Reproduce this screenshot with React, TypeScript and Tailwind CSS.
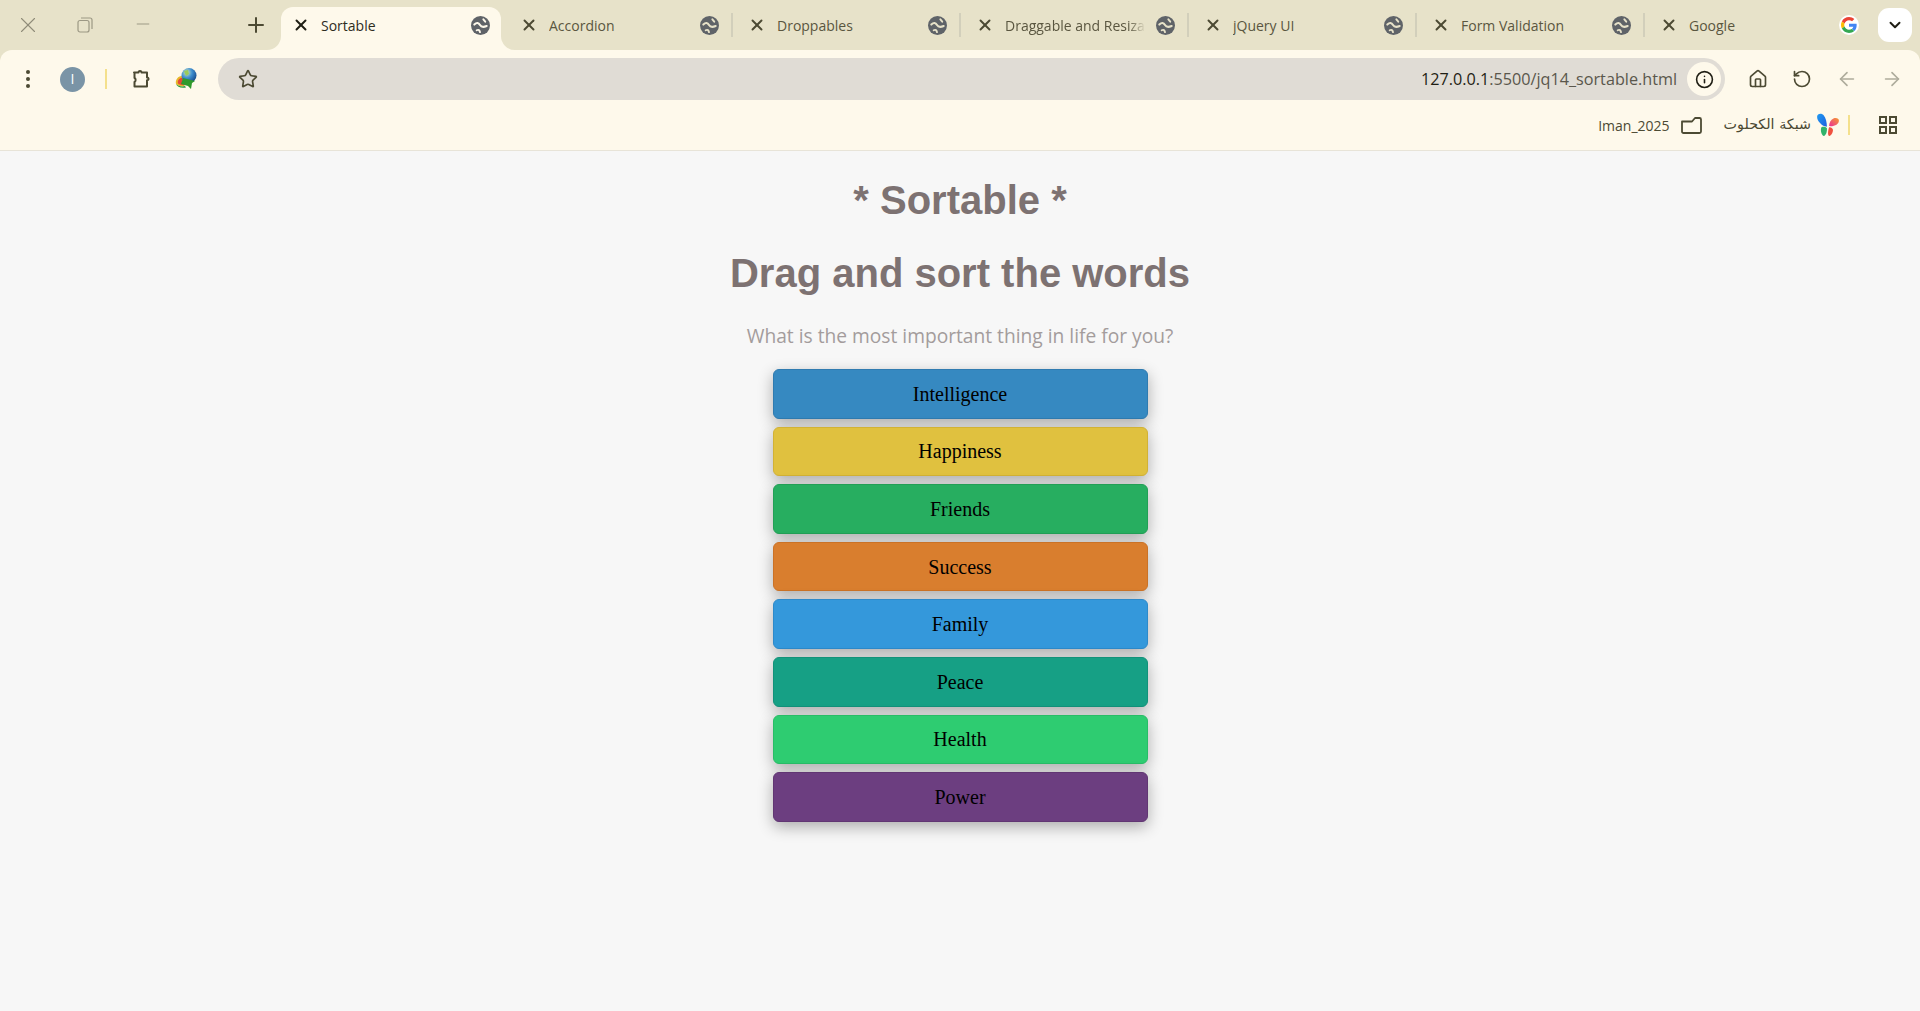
import { ArrowLeft, ArrowRight, ChevronDown, House, Info, Minus, Plus, RotateCcw, Star, X } from 'lucide-react';

const TABS = ['Accordion', 'Droppables', 'Draggable and Resizable', 'jQuery UI', 'Form Validation', 'Google'];

const ITEMS = [
  { label: 'Intelligence', color: 'bg-[#3689c1] border-[#2f7bb0]' },
  { label: 'Happiness', color: 'bg-[#e0c13f] border-[#d2b235]' },
  { label: 'Friends', color: 'bg-[#27ae60] border-[#22a056]' },
  { label: 'Success', color: 'bg-[#d97e2e] border-[#cb7226]' },
  { label: 'Family', color: 'bg-[#3498db] border-[#2d8aca]' },
  { label: 'Peace', color: 'bg-[#16a085] border-[#12927a]' },
  { label: 'Health', color: 'bg-[#2ecc71] border-[#28bd67]' },
  { label: 'Power', color: 'bg-[#6c3e80] border-[#613673]' },
];

function GlobeIcon({ bg }: { bg: string }) {
  return (
    <svg className="shrink-0" width="19" height="19" viewBox="0 0 20 20">
      <circle cx="10" cy="10" r="10" fill="#5f6368" />
      <path d="M3.500 9C6 6.500 8 7 9.500 9.500 11 12 13 12 16.500 10.500" fill="none" stroke={bg} strokeWidth="2.200" strokeLinecap="round" />
      <path d="M13 3.500L15 6M6 15C8 14 9 15 9.500 17" fill="none" stroke={bg} strokeWidth="2" strokeLinecap="round" />
    </svg>
  );
}

function GoogleLogo() {
  return (
    <span className="flex h-[20px] w-[20px] items-center justify-center rounded-full bg-white">
      <svg width="16" height="16" viewBox="0 0 48 48">
        <path fill="#EA4335" d="M24 9.500c3.500 0 6.700 1.200 9.200 3.600l6.900-6.900C35.900 2.400 30.500 0 24 0 14.600 0 6.500 5.400 2.600 13.200l8 6.200C12.500 13.700 17.800 9.500 24 9.500z" />
        <path fill="#4285F4" d="M47 24.500c0-1.600-.1-3.100-.4-4.500H24v9h13c-.6 3-2.200 5.500-4.800 7.200l7.700 6c4.500-4.200 7.100-10.300 7.100-17.700z" />
        <path fill="#FBBC05" d="M10.600 28.600c-.5-1.400-.8-3-.8-4.600s.3-3.200.8-4.600l-8-6.200C.9 16.500 0 20.100 0 24s.9 7.500 2.600 10.800l8-6.200z" />
        <path fill="#34A853" d="M24 48c6.500 0 11.900-2.100 15.900-5.800l-7.700-6c-2.100 1.400-4.900 2.300-8.200 2.300-6.200 0-11.500-4.200-13.400-9.900l-8 6.200C6.500 42.600 14.600 48 24 48z" />
      </svg>
    </span>
  );
}

function PuzzleIcon() {
  return (
    <svg width="20" height="20" viewBox="0 0 20 20" fill="none" stroke="#4c4a33" strokeWidth="2" strokeLinejoin="round">
      <path d="M3 3.500h4.500c0-2 3-2 3 0h5.500v5c2-.2 2 3 0 2.800v6.200H3.500v-4.500c1.500-.6 1.500-3.400 0-4V3.500z" />
    </svg>
  );
}

function IdmLogo() {
  return (
    <svg width="24" height="24" viewBox="0 0 24 24">
      <defs>
        <radialGradient id="idm-globe" cx="0.35" cy="0.3" r="0.8">
          <stop offset="0" stopColor="#cfe8c0" />
          <stop offset="0.45" stopColor="#3f8fd0" />
          <stop offset="1" stopColor="#12407f" />
        </radialGradient>
      </defs>
      <path d="M10 9 C3 8 0 13 1 17 C3 19 7 20 10 19 C6 17 6 12 10 11z" fill="#e8b82a" />
      <path d="M9 10.500 C4 10.500 2 14 3 16.500 C5 18 8 18.500 10 18 C7 16 7 13 9 12z" fill="#e2483a" />
      <path d="M1 17 C3 19 7 20 10 19 L11 20.500 C6 21.500 2 20 1 17z" fill="#2a9c3e" />
      <circle cx="14" cy="8.500" r="7.500" fill="url(#idm-globe)" />
      <path d="M8 11 L20 14 L17 16 L16 22 L13 19 L6 17z" fill="#2f9a2c" />
      <path d="M9 4 L13 3 L14 7 L11 9z" fill="#9ccb5a" />
    </svg>
  );
}

function ButterflyLogo() {
  return (
    <svg width="24" height="24" viewBox="0 0 22 22">
      <defs>
        <linearGradient id="bf-left" x1="0" y1="0" x2="1" y2="1">
          <stop offset="0" stopColor="#1f9bf0" />
          <stop offset="1" stopColor="#1d5fe0" />
        </linearGradient>
        <linearGradient id="bf-right" x1="1" y1="0" x2="0" y2="1">
          <stop offset="0" stopColor="#f59a2c" />
          <stop offset="1" stopColor="#ec2f9c" />
        </linearGradient>
      </defs>
      <path d="M1 3.500C1 .5 5-.5 7 2c2 2.500 3 6.500 3 10.500-2.500 0-4.500-1-6.500-3.500C2 7.500 1 5.500 1 3.500z" fill="url(#bf-left)" />
      <path d="M5 13c2-.8 4.500-.3 5 1 .2 2.500-.5 6-2.500 7C5.500 21.500 3.500 16 5 13z" fill="#31b36b" />
      <path d="M12 12c0-3 1.500-6 4-7 3-1 5 .5 5 2 0 3-4 5.500-9 5z" fill="url(#bf-right)" />
      <path d="M12 13c2 0 4 1 3.500 3.500-.5 3-2.500 5-3.500 4.500-1.500-.5-1-5 0-8z" fill="#f0513f" />
    </svg>
  );
}

function BrowserTab({ title, last, fade }: { title: string; last: boolean; fade: boolean }) {
  return (
    <div className="flex h-[36px] w-[228px] shrink-0 items-center">
      <X size={18} strokeWidth={2.6} className="ml-[15px] shrink-0 text-[#4c4a33]" />
      <span
        className={`ml-[11px] w-[150px] overflow-hidden text-[14px] whitespace-nowrap text-[#5a5640] ${
          fade ? '[mask-image:linear-gradient(to_right,black_82%,transparent_94%)]' : ''
        }`}
      >
        {title}
      </span>
      <span className="flex w-[20px] shrink-0 justify-center">
        {last ? <GoogleLogo /> : <GlobeIcon bg="#e7e2c9" />}
      </span>
      {!last && <span className="ml-[12px] h-[24px] w-[2px] shrink-0 bg-[#d2cfbb]" />}
    </div>
  );
}

export default function App() {
  return (
    <div className="h-[1011px] overflow-hidden bg-[#f7f7f7] font-['Open_Sans',sans-serif]">
      {/* tab strip */}
      <div className="flex h-[50px] items-center bg-[#e7e2c9]">
        <div className="flex w-[281px] shrink-0 items-center">
          <span className="flex w-[56px] justify-center">
            <X size={26} strokeWidth={1} className="text-[#8f8c78]" />
          </span>
          <span className="flex w-[58px] justify-center">
            <svg width="16" height="16" viewBox="0 0 16 16" fill="none" stroke="#9c9884" strokeWidth="1.200">
              <rect x="1" y="3.500" width="11" height="11.500" rx="2" />
              <path d="M4 1h9a2 2 0 0 1 2 2v9" />
            </svg>
          </span>
          <span className="flex w-[58px] justify-center">
            <Minus size={20} strokeWidth={1} className="mb-[3px] text-[#8f8c78]" />
          </span>
          <span className="flex flex-1 justify-end pr-[13px]">
            <Plus size={24} strokeWidth={2} className="text-[#4c4a33]" />
          </span>
        </div>
        {/* active tab */}
        <div className="relative mr-[4px] flex h-[43px] w-[220px] shrink-0 items-center self-end rounded-t-[12px] bg-[#fef9eb] pb-[7px]">
          <span className="absolute bottom-0 left-[-14px] h-[14px] w-[14px] bg-[#fef9eb]">
            <span className="block h-full w-full rounded-br-[14px] bg-[#e7e2c9]" />
          </span>
          <span className="absolute right-[-14px] bottom-0 h-[14px] w-[14px] bg-[#fef9eb]">
            <span className="block h-full w-full rounded-bl-[14px] bg-[#e7e2c9]" />
          </span>
          <X size={18} strokeWidth={2.6} className="ml-[11px] shrink-0 text-[#1f1e14]" />
          <span className="ml-[11px] w-[150px] text-[14px] text-[#2e2c1e]">Sortable</span>
          <GlobeIcon bg="#fef9eb" />
        </div>
        {TABS.map((title, i) => (
          <BrowserTab key={title} title={title} last={i === TABS.length - 1} fade={title.length > 20} />
        ))}
        <button className="ml-[5px] flex h-[34px] w-[34px] items-center justify-center rounded-[11px] bg-white">
          <ChevronDown size={18} strokeWidth={2.6} className="text-[#1f1e14]" />
        </button>
      </div>

      {/* toolbar */}
      <div className="bg-[#e7e2c9]">
        <div className="flex h-[58px] items-center rounded-t-[12px] bg-[#fef9eb] pl-[5px]">
          <span className="flex w-[45px] flex-col items-center gap-[3px]">
            <i className="h-[4px] w-[4px] rounded-full bg-[#4c4a33]" />
            <i className="h-[4px] w-[4px] rounded-full bg-[#4c4a33]" />
            <i className="h-[4px] w-[4px] rounded-full bg-[#4c4a33]" />
          </span>
          <span className="flex w-[45px] justify-center">
            <span className="flex h-[25px] w-[25px] items-center justify-center rounded-full bg-[#7a94a6] text-[14px] leading-none text-white">
              I
            </span>
          </span>
          <span className="flex w-[22px] justify-center">
            <i className="h-[20px] w-[2px] bg-[#f4e08c]" />
          </span>
          <span className="flex w-[47px] justify-center">
            <PuzzleIcon />
          </span>
          <span className="flex w-[45px] justify-center">
            <IdmLogo />
          </span>
          <div className="ml-[9px] flex h-[42px] w-[1507px] items-center rounded-full bg-[#e0dcd5] pr-[4px] pl-[20px]">
            <Star size={20} strokeWidth={2} className="text-[#4c4a33]" />
            <span className="mr-[10px] ml-auto text-[16.200px] text-[#5a574c]">
              <span className="text-[#1f1e14]">127.0.0.1</span>:5500/jq14_sortable.html
            </span>
            <span className="flex h-[34px] w-[34px] items-center justify-center rounded-full bg-[#fef9eb]">
              <Info size={19} strokeWidth={2} className="text-[#1f1e14]" />
            </span>
          </div>
          <span className="ml-[11px] flex w-[44px] justify-center">
            <House size={20} strokeWidth={2} className="text-[#4c4a33]" />
          </span>
          <span className="flex w-[44px] justify-center">
            <RotateCcw size={20} strokeWidth={2} className="text-[#4c4a33]" />
          </span>
          <span className="flex w-[45px] justify-center">
            <ArrowLeft size={22} strokeWidth={1.800} className="text-[#aeac9c]" />
          </span>
          <span className="flex w-[45px] justify-center">
            <ArrowRight size={22} strokeWidth={1.800} className="text-[#aeac9c]" />
          </span>
        </div>
      </div>

      {/* bookmarks bar */}
      <div className="flex h-[43px] items-center justify-end border-b border-[#e8e4d8] bg-[#fef9eb] pr-[23px] pb-[8px]">
        <span className="text-[14px] text-[#4c4a33]">Iman_2025</span>
        <svg className="ml-[11px]" width="21" height="17" viewBox="0 0 21 17" fill="none" stroke="#4c4a33" strokeWidth="1.800" strokeLinejoin="round">
          <path d="M1 4.500h10l3-3.500h4.500a1.500 1.500 0 0 1 1.500 1.500v12a1.500 1.500 0 0 1-1.500 1.500h-16A1.500 1.500 0 0 1 1 14.500z" />
        </svg>
        <span className="ml-[22px] font-['DejaVu_Sans',sans-serif] text-[14.300px] text-[#4c4a33]">شبكة الكحلوت</span>
        <span className="ml-[5px] flex">
          <ButterflyLogo />
        </span>
        <i className="ml-[8px] h-[20px] w-[2px] bg-[#f4e08c]" />
        <svg className="ml-[29px]" width="18" height="18" viewBox="0 0 18 18" fill="none" stroke="#4c4a33" strokeWidth="2">
          <rect x="1" y="1" width="6" height="6" />
          <rect x="11" y="1" width="6" height="6" />
          <rect x="1" y="11" width="6" height="6" />
          <rect x="11" y="11" width="6" height="6" />
        </svg>
      </div>

      {/* page */}
      <main className="flex flex-col items-center">
        <h1 className="mt-[26px] font-['Liberation_Sans',sans-serif] text-[40px] leading-[46px] font-bold text-[#7d7272]">* Sortable *</h1>
        <h2 className="mt-[27px] font-['Liberation_Sans',sans-serif] text-[40px] leading-[46px] font-bold text-[#7d7272]">Drag and sort the words</h2>
        <p className="mt-[26px] text-[19.200px] leading-[28px] text-[#a39c9c]">What is the most important thing in life for you?</p>
        <ul className="mt-[19px] w-[375px]">
          {ITEMS.map((item) => (
            <li
              key={item.label}
              className={`mb-[8px] flex h-[49.6px] items-center justify-center rounded-[6px] border font-['Liberation_Serif',serif] text-[20px] text-black shadow-[0_5px_15px_rgba(0,0,0,0.3)] ${item.color}`}
            >
              {item.label}
            </li>
          ))}
        </ul>
      </main>
    </div>
  );
}
